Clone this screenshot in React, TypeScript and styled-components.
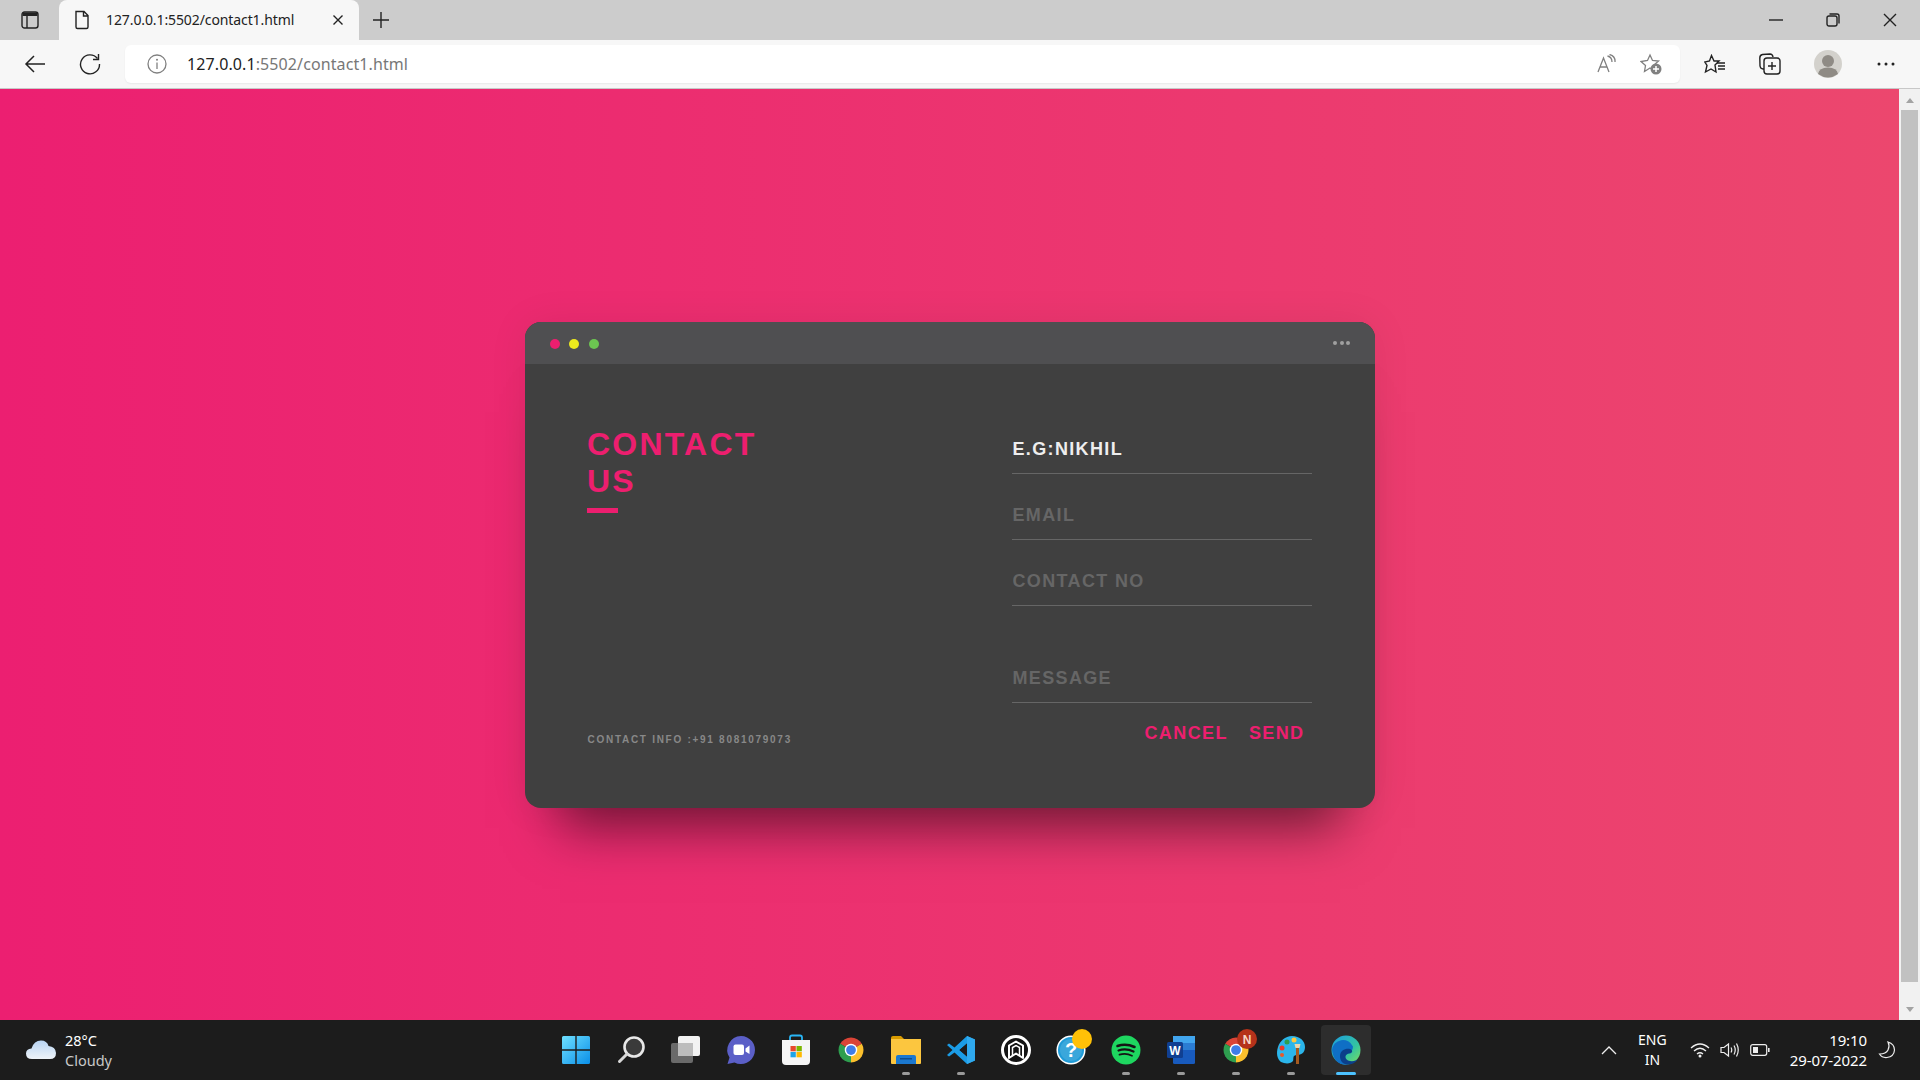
import React from "react";
import styled, { createGlobalStyle } from "styled-components";

const GlobalStyle = createGlobalStyle`
	html, body {
		margin: 0;
		height: 100%;
		overflow: hidden;
		font-family: "Noto Sans", "Open Sans", sans-serif;
	}
	* { box-sizing: border-box; }
`;

const Screen = styled.div`
	display: flex;
	flex-direction: column;
	height: 1080px;
	width: 1920px;
`;

/* browser chrome */
const TabStrip = styled.div`
	align-items: flex-end;
	background: #cccccc;
	display: flex;
	flex: none;
	height: 40px;
`;

const SidebarSlot = styled.div`
	align-items: center;
	align-self: stretch;
	display: flex;
	justify-content: center;
	width: 59px;
`;

const Tab = styled.div`
	align-items: center;
	background: #f7f7f7;
	border-radius: 8px 8px 0 0;
	color: #222;
	display: flex;
	font-size: 14px;
	height: 40px;
	letter-spacing: -0.1px;
	padding: 0 15px 1px 13px;
	width: 300px;

	span {
		flex: 1;
		margin-left: 14px;
		white-space: nowrap;
	}
`;

const NewTab = styled.div`
	align-items: center;
	align-self: stretch;
	display: flex;
	justify-content: center;
	margin-left: 1px;
	width: 42px;
`;

const WindowControls = styled.div`
	align-items: center;
	align-self: stretch;
	display: flex;
	gap: 43px;
	margin-left: auto;
	width: 151px;

	svg { flex: none; }
`;

const Toolbar = styled.div`
	align-items: center;
	background: #f7f7f7;
	border-bottom: 1px solid #c8c8c8;
	display: flex;
	flex: none;
	height: 49px;
	padding: 0 12px 1px 13px;
`;

const ToolSlot = styled.div<{ $width?: number }>`
	align-items: center;
	display: flex;
	flex: none;
	height: 38px;
	justify-content: center;
	width: ${({ $width }) => $width ?? 44}px;
`;

const NavGroup = styled.div`
	display: flex;
	gap: 11px;
	margin-right: 13px;
`;

const ToolGroup = styled.div`
	display: flex;
	gap: 11px;
	margin-left: 13px;
`;

const AddressBar = styled.div`
	align-items: center;
	background: #fff;
	border-radius: 6px;
	box-shadow: 0 1px 2px rgba(0, 0, 0, 0.06);
	display: flex;
	flex: 1;
	height: 38px;
	padding: 0 18px 0 22px;
`;

const Url = styled.div`
	color: #777;
	font-size: 16px;
	letter-spacing: 0.1px;
	margin-left: 20px;
	white-space: nowrap;

	b {
		color: #222;
		font-weight: 400;
	}
`;

const AddressActions = styled.div`
	align-items: center;
	display: flex;
	gap: 23px;
	margin-left: auto;
`;

/* page */
const Viewport = styled.div`
	display: flex;
	flex: 1;
	min-height: 0;
`;

const Page = styled.main`
	background: linear-gradient(to right, #ec1f71 0%, #ec476e 100%);
	display: flex;
	flex: 1;
	justify-content: center;
	padding-top: 233px;
`;

const Card = styled.section`
	align-self: flex-start;
	background: #404040;
	border-radius: 16px;
	box-shadow:
		0 55px 50px -35px rgba(0, 0, 0, 0.5),
		0 0 40px rgba(0, 0, 0, 0.07);
	font-family: "Liberation Sans", Arial, sans-serif;
	overflow: hidden;
	width: 850px;
`;

const CardHeader = styled.header`
	align-items: center;
	background: #4f4f51;
	display: flex;
	gap: 9.5px;
	height: 42px;
	padding: 2px 25px 0;
`;

const Dot = styled.span<{ $color: string }>`
	background: ${({ $color }) => $color};
	border-radius: 50%;
	height: 10px;
	width: 10px;
`;

const MoreDots = styled.div`
	display: flex;
	gap: 2.5px;
	margin-left: auto;
	margin-right: -0.5px;
	margin-top: -3px;

	i {
		background: #a0a0a0;
		border-radius: 50%;
		height: 4px;
		width: 4px;
	}
`;

const CardBody = styled.div`
	display: grid;
	grid-template-columns: 1fr 300px;
	padding: 61px 63px 57px 62px;
`;

const LeftColumn = styled.div`
	display: flex;
	flex-direction: column;
	justify-content: space-between;
	padding-top: 1px;
`;

const Title = styled.h1`
	color: #ed1e6f;
	font-size: 32px;
	font-weight: 700;
	letter-spacing: 2.2px;
	line-height: 37px;
	margin: 0;
	padding-left: 0.5px;
	width: 200px;

	&::after {
		background: #ed1e6f;
		content: "";
		display: block;
		height: 5px;
		margin: 8px 0 0 -0.5px;
		width: 31px;
	}
`;

const ContactInfo = styled.div`
	color: #888;
	font-size: 10px;
	font-weight: 700;
	letter-spacing: 1.72px;
	line-height: 12px;
	margin-bottom: 5px;
	padding-left: 1px;
`;

const RightColumn = styled.form`
	display: flex;
	flex-direction: column;
`;

const Field = styled.input<{ $gapTop?: boolean }>`
	background: transparent;
	border: 0;
	border-bottom: 1px solid #666;
	color: #eee;
	font-family: inherit;
	font-size: 18px;
	font-weight: 700;
	height: 49px;
	letter-spacing: 1.35px;
	margin-bottom: 17px;
	margin-top: ${({ $gapTop }) => ($gapTop ? 31 : 0)}px;
	outline: none;
	padding: 1px 0 0 1px;
	width: 100%;

	&::placeholder {
		color: #666;
		opacity: 1;
	}
`;

const Actions = styled.div`
	display: flex;
	gap: 5px;
	justify-content: flex-end;
	margin-top: -5px;
`;

const ActionButton = styled.button`
	background: none;
	border: 0;
	color: #ed1e6f;
	font-family: inherit;
	font-size: 18px;
	font-weight: 700;
	height: 36px;
	letter-spacing: 1.4px;
	padding: 0 7px 0 9px;
`;

const Scrollbar = styled.div`
	align-items: center;
	background: #f1f1f1;
	display: flex;
	flex: none;
	flex-direction: column;
	justify-content: space-between;
	padding: 9px 2px 8px;
	width: 21px;
`;

const ScrollThumb = styled.div`
	background: #c1c1c1;
	flex: 1;
	margin: 7px 0 25px;
	width: 100%;
`;

const Arrow = styled.i<{ $down?: boolean }>`
	border-left: 4.5px solid transparent;
	border-right: 4.5px solid transparent;
	${({ $down }) =>
		$down ? "border-top: 5px solid #a3a3a3;" : "border-bottom: 5px solid #a3a3a3;"}
	height: 0;
	width: 0;
`;

/* taskbar */
const Taskbar = styled.footer`
	background: #1c1c1c;
	color: #fff;
	display: grid;
	flex: none;
	font-family: "Noto Sans", "Open Sans", sans-serif;
	grid-template-columns: 1fr auto 1fr;
	height: 60px;
	padding-left: 2px;
`;

const Weather = styled.div`
	align-items: center;
	display: flex;
	gap: 9px;
	padding-left: 24px;
`;

const WeatherText = styled.div`
	font-size: 14.5px;
	line-height: 20px;
	margin-top: -1px;

	small {
		color: #c8c8c8;
		display: block;
		font-size: 14.5px;
	}
`;

const AppRow = styled.div`
	display: flex;
`;

const AppItem = styled.div<{ $active?: boolean }>`
	align-items: center;
	display: flex;
	height: 60px;
	justify-content: center;
	position: relative;
	width: 55px;

	&::before {
		background: ${({ $active }) => ($active ? "#2d2d2d" : "transparent")};
		border-radius: 4px;
		content: "";
		height: 50px;
		left: 2.5px;
		position: absolute;
		top: 5px;
		width: 50px;
	}

	svg {
		overflow: visible;
		position: relative;
	}
`;

const RunningMark = styled.span<{ $active?: boolean }>`
	background: ${({ $active }) => ($active ? "#4cc2ff" : "#9a9a9a")};
	border-radius: 2px;
	bottom: 5px;
	height: 3px;
	position: absolute;
	width: ${({ $active }) => ($active ? 20 : 8)}px;
`;

const Tray = styled.div`
	align-items: center;
	display: flex;
	justify-content: flex-end;
	padding-right: 24px;
`;

const TrayIcons = styled.div`
	align-items: center;
	display: flex;
	gap: 10px;
	margin-left: 23px;
`;

const Lang = styled.div`
	font-size: 14px;
	line-height: 20px;
	margin-left: 21px;
	text-align: center;
`;

const Clock = styled.div`
	font-size: 15px;
	letter-spacing: -0.1px;
	line-height: 20px;
	margin-left: 20px;
	margin-top: -1px;
	text-align: right;
`;

const MoonSlot = styled.div`
	display: flex;
	margin-left: 11px;
`;

const stroke = { fill: "none", stroke: "#222", strokeWidth: 1.4 };
const grayStroke = { fill: "none", stroke: "#808080", strokeWidth: 1.3 };

function ChromeLogo({ size = 30 }: { size?: number }) {
	return (
		<svg width={size} height={size} viewBox="0 0 48 48">
			<path d="M24 24 6.7 14A20 20 0 0 1 41.3 14Z" fill="#db4437" />
			<path d="M24 24 41.3 14A20 20 0 0 1 24 44Z" fill="#fbc02d" />
			<path d="M24 24 24 44A20 20 0 0 1 6.7 14Z" fill="#2e9e4f" />
			<circle cx="24" cy="24" r="10" fill="#fff" />
			<circle cx="24" cy="24" r="7.8" fill="#3f7de8" />
		</svg>
	);
}

function StartIcon() {
	return (
		<svg width="30" height="30" viewBox="0 0 30 30">
			<defs>
				<linearGradient id="win" x1="0" y1="0" x2="1" y2="1">
					<stop offset="0" stopColor="#6fe0ff" />
					<stop offset="1" stopColor="#0a8fe8" />
				</linearGradient>
			</defs>
			<path
				d="M1 2.5A1.5 1.5 0 0 1 2.500 1H14.300V14.300H1ZM15.700 1H27.500A1.500 1.500 0 0 1 29 2.500V14.300H15.700ZM1 15.700H14.300V29H2.500A1.500 1.500 0 0 1 1 27.500ZM15.700 15.700H29V27.500A1.500 1.500 0 0 1 27.500 29H15.700Z"
				fill="url(#win)"
			/>
		</svg>
	);
}

function SearchIcon() {
	return (
		<svg width="30" height="30" viewBox="0 0 30 30">
			<circle cx="18" cy="12" r="9.500" fill="#3a3a3a" stroke="#e8e8e8" strokeWidth="2.600" />
			<path d="M11 19 3.500 26.500" stroke="#d8d8d8" strokeWidth="3" strokeLinecap="round" />
		</svg>
	);
}

function TaskViewIcon() {
	return (
		<svg width="32" height="30" viewBox="0 0 32 30">
			<rect x="1" y="8" width="22" height="20" rx="2" fill="#6a6a6a" />
			<rect x="8" y="1" width="22" height="20" rx="2" fill="#f2f2f2" />
			<rect x="8" y="8" width="15" height="13" fill="#bdbdbd" />
		</svg>
	);
}

function ChatIcon() {
	return (
		<svg width="30" height="30" viewBox="0 0 30 30">
			<path d="M15 1A14 14 0 1 1 8.500 27.400L1.500 29 3.500 22.500A14 14 0 0 1 15 1Z" fill="#5b5fc7" />
			<rect x="7.500" y="9.500" width="10.500" height="10.500" rx="2" fill="#fff" />
			<path d="M19.500 13.500 23.500 10.500V19L19.500 16.500Z" fill="#fff" />
		</svg>
	);
}

function StoreIcon() {
	return (
		<svg width="30" height="32" viewBox="0 0 30 32">
			<path d="M9 7V3.500Q9 1.500 11 1.500H19Q21 1.500 21 3.500V7" fill="none" stroke="#29b6f6" strokeWidth="1.800" />
			<path d="M1 6H29V27Q29 31 25 31H5Q1 31 1 27Z" fill="#f5f5f5" />
			<rect x="9.500" y="12" width="5.300" height="5.300" fill="#e8492d" />
			<rect x="15.500" y="12" width="5.300" height="5.300" fill="#7bb600" />
			<rect x="9.500" y="18" width="5.300" height="5.300" fill="#1fa4e8" />
			<rect x="15.500" y="18" width="5.300" height="5.300" fill="#ffb900" />
		</svg>
	);
}

function ExplorerIcon() {
	return (
		<svg width="30" height="28" viewBox="0 0 30 28">
			<path d="M0 2Q0 0 2 0H10L13 3H0Z" fill="#d99b00" />
			<path d="M0 3H30V27Q30 28 29 28H1Q0 28 0 27Z" fill="#fcc63f" />
			<path d="M5 21Q5 19 7 19H23Q25 19 25 21V28H5Z" fill="#1b78cf" />
			<rect x="9" y="22" width="12" height="1.500" fill="#0c4d8f" />
		</svg>
	);
}

function VsCodeIcon() {
	return (
		<svg width="30" height="30" viewBox="0 0 30 30">
			<path d="M21 1 29 4.500V25.500L21 29 8.500 17.500 3 21.500 1 20 6.500 15 1 10 3 8.500 8.500 12.500Z M21 8.500 13.500 15 21 21.500Z" fill="#1b9ce6" fillRule="evenodd" />
			<path d="M21 1 29 4.500V25.500L21 29Z" fill="#2fa9ee" />
			<path d="M21 8.500 13.500 15 21 21.500Z" fill="#1c1c1c" />
		</svg>
	);
}

function HouseBadgeIcon() {
	return (
		<svg width="30" height="30" viewBox="0 0 30 30">
			<circle cx="15" cy="15" r="13.500" fill="#141414" stroke="#fff" strokeWidth="3" />
			<path d="M8 23V10.500L15 6.500 22 10.500V23L15 18.500Z" fill="none" stroke="#fff" strokeWidth="2" strokeLinejoin="round" />
			<path d="M11.500 21V12.500L15 10.500 18.500 12.500V21" fill="none" stroke="#fff" strokeWidth="1.500" />
		</svg>
	);
}

function HelpIcon() {
	return (
		<svg width="30" height="30" viewBox="0 0 30 30">
			<circle cx="15" cy="15" r="13.800" fill="#1f9bd7" stroke="#fff" strokeWidth="1.500" />
			<circle cx="15" cy="15" r="11" fill="#fff" opacity="0.12" />
			<text x="15" y="22" fontFamily="Liberation Sans" fontSize="20" fontWeight="700" fill="#fff" textAnchor="middle">?</text>
			<circle cx="26" cy="4" r="10" fill="#ffc107" />
		</svg>
	);
}

function SpotifyIcon() {
	return (
		<svg width="30" height="30" viewBox="0 0 30 30">
			<circle cx="15" cy="15" r="14.500" fill="#1ed760" />
			<path d="M6.500 11Q15 8 23.500 12" fill="none" stroke="#151515" strokeWidth="2.600" strokeLinecap="round" />
			<path d="M7.500 15.500Q15 13 22.500 16.500" fill="none" stroke="#151515" strokeWidth="2.200" strokeLinecap="round" />
			<path d="M8.500 19.700Q15 17.700 21 20.700" fill="none" stroke="#151515" strokeWidth="1.800" strokeLinecap="round" />
		</svg>
	);
}

function WordIcon() {
	return (
		<svg width="30" height="30" viewBox="0 0 30 30">
			<rect x="7" y="1" width="22" height="28" rx="1.500" fill="#185abd" />
			<rect x="7" y="1" width="22" height="7" fill="#41a5ee" />
			<rect x="7" y="8" width="22" height="7" fill="#2b7cd3" />
			<rect x="1" y="7" width="16" height="16" rx="1.500" fill="#103f91" />
			<text x="9" y="20" fontFamily="Liberation Sans" fontSize="12" fontWeight="700" fill="#fff" textAnchor="middle">W</text>
		</svg>
	);
}

function ChromeBadgeIcon() {
	return (
		<svg width="30" height="30" viewBox="0 0 30 30">
			<ChromeLogo size={30} />
			<circle cx="26" cy="4" r="10" fill="#b5321a" />
			<text x="26" y="8.500" fontFamily="Liberation Sans" fontSize="12" fontWeight="700" fill="#f6d7c8" textAnchor="middle">N</text>
		</svg>
	);
}

function PaintIcon() {
	return (
		<svg width="30" height="30" viewBox="0 0 30 30">
			<path d="M16 1C24 1 29 6 29 12 29 18 25 20 21 20 16 20 18 24 17 26 15 29 9 29 5 27 1 24 0 18 2 12 4 6 9 1 16 1Z" fill="#2bb5ea" />
			<circle cx="6" cy="13" r="2.500" fill="#e8392a" />
			<circle cx="11" cy="7" r="2.500" fill="#2e9e4f" />
			<circle cx="18" cy="5" r="2.500" fill="#ffc83d" />
			<circle cx="6" cy="20" r="2" fill="#e85a2a" />
			<rect x="20" y="11" width="3" height="18" fill="#a55a1f" />
			<path d="M18.500 9H24.500L23.500 13H19.500Z" fill="#ead7b0" />
		</svg>
	);
}

function EdgeIcon() {
	return (
		<svg width="30" height="30" viewBox="0 0 30 30">
			<defs>
				<linearGradient id="edgeTop" x1="0" y1="0" x2="1" y2="1">
					<stop offset="0" stopColor="#1b9de2" />
					<stop offset="0.6" stopColor="#34c4a0" />
					<stop offset="1" stopColor="#7fe05a" />
				</linearGradient>
			</defs>
			<circle cx="15" cy="15" r="14.500" fill="url(#edgeTop)" />
			<path d="M1 15A11 11 0 0 1 22 11.500Q22 18 15 18 10 18 10 21.500 10 27.500 17 29.500 3 31 1 15Z" fill="#0f6fc5" />
			<path d="M9 21C9 15 15 13 19 14 22 15 22 18 18.500 18.500 14 19 13 23 17 25.500 21 27 25 26 27 24 24 29 18 30.500 14 29 11 28 9 25 9 21Z" fill="#0b3f8a" />
		</svg>
	);
}

export default function App() {
	return (
		<Screen>
			<GlobalStyle />
			<TabStrip>
				<SidebarSlot>
					<svg width="18" height="18" viewBox="0 0 18 18">
						<rect x="1" y="1" width="16" height="16" rx="2.500" {...stroke} />
						<path d="M1.500 1.500H16.500V5H1.500Z" fill="#222" />
						<path d="M6 5V17" {...stroke} />
					</svg>
				</SidebarSlot>
				<Tab>
					<svg width="20" height="20" viewBox="0 0 20 20">
						<path d="M4 1.500H12L16 5.500V17Q16 18.500 14.500 18.500H5.500Q4 18.500 4 17Z M11.500 1.500V6H16" {...stroke} />
					</svg>
					<span>127.0.0.1:5502/contact1.html</span>
					<svg width="12" height="12" viewBox="0 0 12 12">
						<path d="M1.500 1.500 10.500 10.500M10.500 1.500 1.500 10.500" {...stroke} />
					</svg>
				</Tab>
				<NewTab>
					<svg width="18" height="18" viewBox="0 0 18 18">
						<path d="M9 1V17M1 9H17" {...stroke} />
					</svg>
				</NewTab>
				<WindowControls>
					<svg width="14" height="2" viewBox="0 0 14 2">
						<path d="M0 1H14" {...stroke} />
					</svg>
					<svg width="14" height="14" viewBox="0 0 14 14">
						<rect x="1" y="3" width="10" height="10" rx="2" {...stroke} />
						<path d="M3.500 1H11Q13 1 13 3V10.500" {...stroke} />
					</svg>
					<svg width="14" height="14" viewBox="0 0 14 14">
						<path d="M1 1 13 13M13 1 1 13" {...stroke} />
					</svg>
				</WindowControls>
			</TabStrip>

			<Toolbar>
				<NavGroup>
					<ToolSlot>
						<svg width="22" height="20" viewBox="0 0 22 20">
							<path d="M21 10H2M10 2 2 10 10 18" fill="none" stroke="#222" strokeWidth="1.500" />
						</svg>
					</ToolSlot>
					<ToolSlot>
						<svg width="22" height="22" viewBox="0 0 22 22">
							<path d="M18.500 5.500A9.500 9.500 0 1 0 20.500 11" {...stroke} />
							<path d="M19.500 1V6.500H14" {...stroke} />
						</svg>
					</ToolSlot>
				</NavGroup>
				<AddressBar>
					<svg width="20" height="20" viewBox="0 0 20 20">
						<circle cx="10" cy="10" r="9" {...grayStroke} />
						<path d="M10 8.500V15" {...grayStroke} />
						<circle cx="10" cy="5.800" r="1" fill="#808080" />
					</svg>
					<Url>
						<b>127.0.0.1</b>:5502/contact1.html
					</Url>
					<AddressActions>
						<svg width="20" height="20" viewBox="0 0 20 20">
							<path d="M1 18 6.500 4 12 18M3 13H10" {...grayStroke} />
							<path d="M10.500 2Q15 3 15 8M12.500 0.500Q18.500 2 18 8" {...grayStroke} />
						</svg>
						<svg width="22" height="22" viewBox="0 0 22 22">
							<path d="M10 2 12.500 7.500 18.500 8 14 12 15 18 10 15 4.500 18.500 5.500 12.500 1 8.500 7.500 7.500Z" {...grayStroke} />
							<circle cx="16" cy="16" r="5.500" fill="#808080" />
							<path d="M16 13V19M13 16H19" stroke="#fff" strokeWidth="1.500" />
						</svg>
					</AddressActions>
				</AddressBar>
				<ToolGroup>
					<ToolSlot>
						<svg width="22" height="20" viewBox="0 0 22 20">
							<path d="M7.500 1.500 10 7H15L11 11 12 18 7 15 1.500 18 3 11.500 0.800 8 5.500 7Z" {...stroke} />
							<path d="M13 9H21M14 12H21M14 15H21" {...stroke} />
						</svg>
					</ToolSlot>
					<ToolSlot>
						<svg width="22" height="22" viewBox="0 0 22 22">
							<path d="M5 16H4Q1.500 16 1 13L0.800 5Q0.800 2 3.500 1.500L11 1Q13.500 1 14 4" {...stroke} />
							<rect x="5" y="5" width="16" height="16" rx="3" {...stroke} />
							<path d="M13 9V17M9 13H17" {...stroke} />
						</svg>
					</ToolSlot>
					<ToolSlot $width={50}>
						<svg width="28" height="28" viewBox="0 0 28 28">
							<circle cx="14" cy="14" r="14" fill="#d3d1cc" />
							<circle cx="14" cy="11" r="6" fill="#8f8b85" />
							<path d="M4 24Q5 17.500 14 17.500 23 17.500 24 24 14 31 4 24Z" fill="#8f8b85" />
						</svg>
					</ToolSlot>
					<ToolSlot>
						<svg width="18" height="4" viewBox="0 0 18 4">
							<circle cx="2" cy="2" r="1.500" fill="#222" />
							<circle cx="9" cy="2" r="1.500" fill="#222" />
							<circle cx="16" cy="2" r="1.500" fill="#222" />
						</svg>
					</ToolSlot>
				</ToolGroup>
			</Toolbar>

			<Viewport>
				<Page>
					<Card>
						<CardHeader>
							<Dot $color="#ed1e6f" />
							<Dot $color="#ede91d" />
							<Dot $color="#6cc551" />
							<MoreDots>
								<i />
								<i />
								<i />
							</MoreDots>
						</CardHeader>
						<CardBody>
							<LeftColumn>
								<Title>CONTACT US</Title>
								<ContactInfo>CONTACT INFO :+91 8081079073</ContactInfo>
							</LeftColumn>
							<RightColumn>
								<Field defaultValue="E.G:NIKHIL" />
								<Field placeholder="EMAIL" />
								<Field placeholder="CONTACT NO" />
								<Field placeholder="MESSAGE" $gapTop />
								<Actions>
									<ActionButton type="button">CANCEL</ActionButton>
									<ActionButton type="button">SEND</ActionButton>
								</Actions>
							</RightColumn>
						</CardBody>
					</Card>
				</Page>
				<Scrollbar>
					<Arrow />
					<ScrollThumb />
					<Arrow $down />
				</Scrollbar>
			</Viewport>

			<Taskbar>
				<Weather>
					<svg width="30" height="20" viewBox="0 0 30 20">
						<defs>
							<linearGradient id="cloud" x1="0" y1="0" x2="0" y2="1">
								<stop offset="0" stopColor="#b8d4f2" />
								<stop offset="1" stopColor="#eef3f8" />
							</linearGradient>
						</defs>
						<path d="M6 19Q0 19 0 13.500 0 9 5.500 8.500 8 0.500 15 0.500 21 0.500 22.500 6 29.500 6.500 30 13 30 19 24 19Z" fill="url(#cloud)" />
					</svg>
					<WeatherText>
						28°C
						<small>Cloudy</small>
					</WeatherText>
				</Weather>
				<AppRow>
					<AppItem><StartIcon /></AppItem>
					<AppItem><SearchIcon /></AppItem>
					<AppItem><TaskViewIcon /></AppItem>
					<AppItem><ChatIcon /></AppItem>
					<AppItem><StoreIcon /></AppItem>
					<AppItem><ChromeLogo /></AppItem>
					<AppItem><ExplorerIcon /><RunningMark /></AppItem>
					<AppItem><VsCodeIcon /><RunningMark /></AppItem>
					<AppItem><HouseBadgeIcon /></AppItem>
					<AppItem><HelpIcon /></AppItem>
					<AppItem><SpotifyIcon /><RunningMark /></AppItem>
					<AppItem><WordIcon /><RunningMark /></AppItem>
					<AppItem><ChromeBadgeIcon /><RunningMark /></AppItem>
					<AppItem><PaintIcon /><RunningMark /></AppItem>
					<AppItem $active><EdgeIcon /><RunningMark $active /></AppItem>
				</AppRow>
				<Tray>
					<svg width="16" height="10" viewBox="0 0 16 10">
						<path d="M1 9 8 2 15 9" fill="none" stroke="#eee" strokeWidth="1.300" />
					</svg>
					<Lang>
						ENG
						<br />
						IN
					</Lang>
					<TrayIcons>
						<svg width="20" height="16" viewBox="0 0 20 16">
							<path d="M1 6Q10 -2 19 6M4 9Q10 3.500 16 9M7 12Q10 9.500 13 12" fill="none" stroke="#eee" strokeWidth="1.300" />
							<circle cx="10" cy="14" r="1.500" fill="#eee" />
						</svg>
						<svg width="20" height="16" viewBox="0 0 20 16">
							<path d="M1 5.500H4L8.500 2V14L4 10.500H1Z" fill="none" stroke="#eee" strokeWidth="1.200" />
							<path d="M11 5.500Q12.500 8 11 10.500M14 3.500Q16.500 8 14 12.500M16.500 1.500Q20 8 16.500 14.500" fill="none" stroke="#eee" strokeWidth="1.200" />
						</svg>
						<svg width="20" height="12" viewBox="0 0 20 12">
							<rect x="0.700" y="0.700" width="16" height="10.600" rx="2" fill="none" stroke="#eee" strokeWidth="1.200" />
							<rect x="3" y="3" width="5" height="6" fill="#eee" />
							<rect x="18" y="4" width="1.600" height="4" fill="#eee" />
						</svg>
					</TrayIcons>
					<Clock>
						19:10
						<br />
						29-07-2022
					</Clock>
					<MoonSlot>
						<svg width="18" height="18" viewBox="0 0 18 18">
							<path d="M10 1Q12 5 10 9 8 13 1.500 13 4 17 9 16.500 16 15.500 16.500 9 16.500 3 10 1Z" fill="none" stroke="#eee" strokeWidth="1.200" />
						</svg>
					</MoonSlot>
				</Tray>
			</Taskbar>
		</Screen>
	);
}
